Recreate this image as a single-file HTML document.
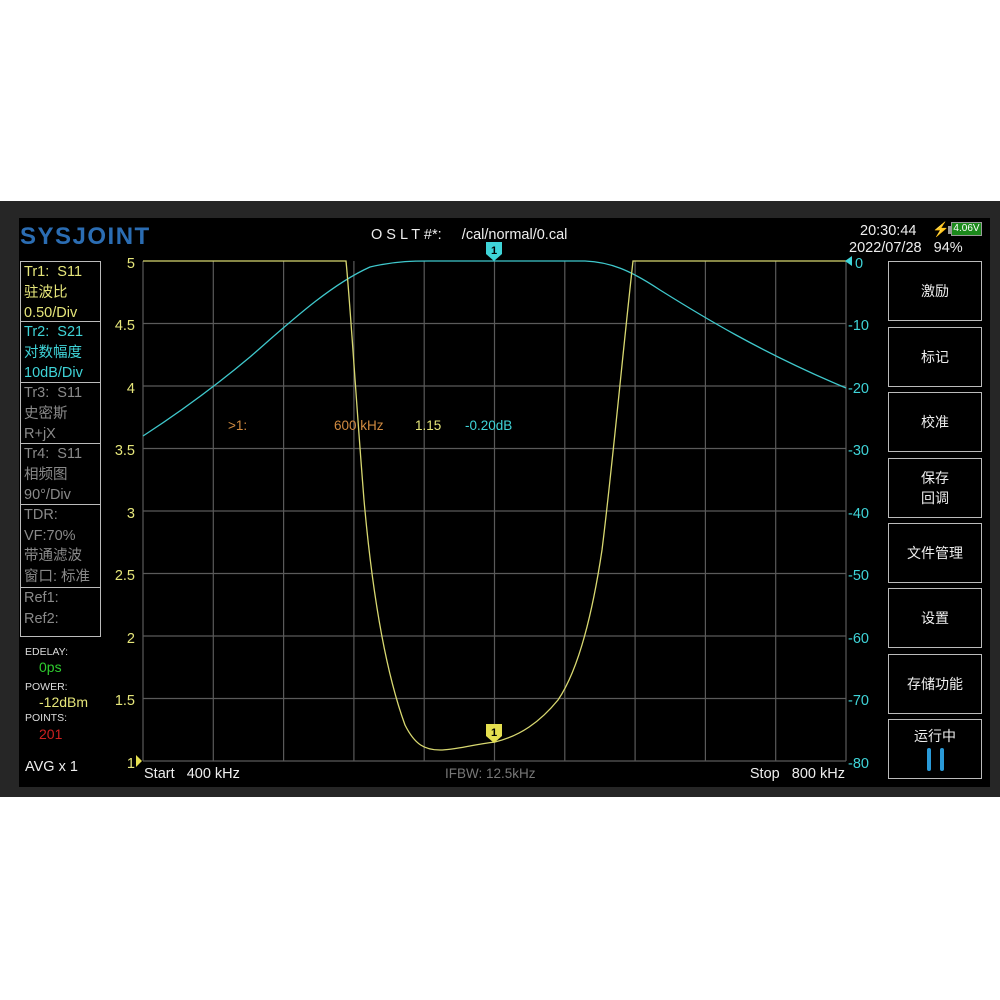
<!DOCTYPE html>
<html><head><meta charset="utf-8"><style>
*{margin:0;padding:0;box-sizing:border-box}
body{width:1000px;height:1000px;background:#fff;position:relative;overflow:hidden;font-family:"Liberation Sans","Noto Sans CJK SC",sans-serif}
.t{position:absolute;white-space:nowrap;line-height:1}
.box{position:absolute;left:20px;width:81px;border:1px solid #bbb}
.btn{position:absolute;left:888px;width:94px;height:60px;border:1.5px solid #bbb;color:#eee;font-size:14px;display:flex;align-items:center;justify-content:center;text-align:center;line-height:20px;font-family:"Noto Sans CJK SC",sans-serif}
.lp{font-size:14.5px;line-height:20.5px;padding-left:3px;font-family:"Liberation Sans","Noto Sans CJK SC",sans-serif}
</style></head><body>
<div style="position:absolute;left:0;top:201px;width:1000px;height:596px;background:#262626"></div>
<div style="position:absolute;left:19px;top:218px;width:971px;height:569px;background:#000"></div>
<div class="t" style="left:20px;top:225px;font-size:24px;font-weight:bold;color:#2b6db3;letter-spacing:1.5px">SYSJOINT</div>
<div class="t" style="left:371px;top:228px;font-size:14.5px;color:#eee">O S L T #*: &nbsp;&nbsp;&nbsp; /cal/normal/0.cal</div>
<div class="t" style="left:860px;top:224px;font-size:14.5px;color:#eee">20:30:44</div>
<div class="t" style="left:932px;top:222px;font-size:14px;color:#f0c020">⚡</div>
<div style="position:absolute;left:948px;top:226px;width:3px;height:8px;background:#999"></div>
<div style="position:absolute;left:951px;top:222px;width:31px;height:14px;border:1px solid #999;background:#1c8a1c;color:#fff;font-size:10px;line-height:12px;text-align:center">4.06V</div>
<div class="t" style="left:849px;top:241px;font-size:14.5px;color:#eee">2022/07/28 &nbsp;&nbsp;94%</div>

<div class="box lp" style="top:261px;height:61px;color:#e6e67a">Tr1: &nbsp;S11<br>驻波比<br>0.50/Div</div>
<div class="box lp" style="top:321px;height:62px;color:#3fd4d8">Tr2: &nbsp;S21<br>对数幅度<br>10dB/Div</div>
<div class="box lp" style="top:382px;height:62px;color:#8a8a8a">Tr3: &nbsp;S11<br>史密斯<br>R+jX</div>
<div class="box lp" style="top:443px;height:62px;color:#8a8a8a">Tr4: &nbsp;S11<br>相频图<br>90°/Div</div>
<div class="box lp" style="top:504px;height:84px;color:#8a8a8a">TDR:<br>VF:70%<br>带通滤波<br>窗口: 标准</div>
<div class="box lp" style="top:587px;height:50px;color:#8a8a8a">Ref1:<br>Ref2:</div>
<div class="t" style="left:25px;top:647px;font-size:10.5px;color:#ddd">EDELAY:</div>
<div class="t" style="left:39px;top:660px;font-size:14px;color:#2ecc2e">0ps</div>
<div class="t" style="left:25px;top:682px;font-size:10.5px;color:#ddd">POWER:</div>
<div class="t" style="left:39px;top:695px;font-size:14px;color:#e6e67a">-12dBm</div>
<div class="t" style="left:25px;top:713px;font-size:10.5px;color:#ddd">POINTS:</div>
<div class="t" style="left:39px;top:727px;font-size:14px;color:#cc2020">201</div>
<div class="t" style="left:25px;top:760px;font-size:14.5px;color:#eee">AVG x 1</div>

<svg style="position:absolute;left:0;top:0" width="1000" height="1000" font-family="Liberation Sans,sans-serif">
<g stroke="#5a5a5a" stroke-width="1.2">
<line x1="143" y1="261" x2="143" y2="761"/><line x1="213.3" y1="261" x2="213.3" y2="761"/><line x1="283.6" y1="261" x2="283.6" y2="761"/><line x1="353.9" y1="261" x2="353.9" y2="761"/><line x1="424.2" y1="261" x2="424.2" y2="761"/><line x1="494.5" y1="261" x2="494.5" y2="761"/><line x1="564.8" y1="261" x2="564.8" y2="761"/><line x1="635.1" y1="261" x2="635.1" y2="761"/><line x1="705.4" y1="261" x2="705.4" y2="761"/><line x1="775.7" y1="261" x2="775.7" y2="761"/><line x1="846" y1="261" x2="846" y2="761"/>
<line x1="143" y1="323.5" x2="846" y2="323.5"/><line x1="143" y1="386" x2="846" y2="386"/><line x1="143" y1="448.5" x2="846" y2="448.5"/><line x1="143" y1="511" x2="846" y2="511"/><line x1="143" y1="573.5" x2="846" y2="573.5"/><line x1="143" y1="636" x2="846" y2="636"/><line x1="143" y1="698.5" x2="846" y2="698.5"/><line x1="143" y1="761" x2="846" y2="761"/>
</g>
<path d="M143,436 C180,412 213,388 250,357 C290,322 330,285 370,267 C400,260 420,261 440,261 L585,261 C610,262 630,270 660,290 C700,315 760,352 846,388" fill="none" stroke="#3fc8cc" stroke-width="1.3"/>
<path d="M143,261 L346,261 C350,300 356,400 364,500 C372,590 385,670 405,725 C415,745 425,750 440,750 C455,750 470,745 495,742 C520,736 540,722 558,700 C575,675 590,630 602,550 C612,470 622,360 633,261 L846,261" fill="none" stroke="#d8d870" stroke-width="1.3"/>
<path d="M486,242 h16 v12 l-8,7 l-8,-7z" fill="#3fd4d8"/><text x="494" y="254" font-size="11" text-anchor="middle" fill="#000" font-weight="bold">1</text>
<path d="M486,724 h16 v12 l-8,7 l-8,-7z" fill="#e6e050"/><text x="494" y="736" font-size="11" text-anchor="middle" fill="#000" font-weight="bold">1</text>
<path d="M136,755 l6,6 l-6,6z" fill="#e6e050"/>
<path d="M852,256 l-7,5 l7,5z" fill="#3fd4d8"/>
<g font-size="14.5" fill="#e6e67a" text-anchor="end">
<text x="135" y="268">5</text><text x="135" y="330">4.5</text><text x="135" y="393">4</text><text x="135" y="455">3.5</text><text x="135" y="518">3</text><text x="135" y="580">2.5</text><text x="135" y="643">2</text><text x="135" y="705">1.5</text><text x="135" y="768">1</text>
</g>
<g font-size="14.5" fill="#3fd4d8">
<text x="855" y="268">0</text><text x="848" y="330">-10</text><text x="848" y="393">-20</text><text x="848" y="455">-30</text><text x="848" y="518">-40</text><text x="848" y="580">-50</text><text x="848" y="643">-60</text><text x="848" y="705">-70</text><text x="848" y="768">-80</text>
</g>
<text x="228" y="430" font-size="13.5" fill="#d08a40">&gt;1:</text>
<text x="334" y="430" font-size="13.5" fill="#d08a40">600 kHz</text>
<text x="415" y="430" font-size="13.5" fill="#e6e67a">1.15</text>
<text x="465" y="430" font-size="13.5" fill="#3fd4d8">-0.20dB</text>
<text x="144" y="778" font-size="14.5" fill="#eee">Start &#160;&#160;400 kHz</text>
<text x="445" y="778" font-size="13.5" fill="#777">IFBW: 12.5kHz</text>
<text x="845" y="778" font-size="14.5" fill="#eee" text-anchor="end">Stop &#160;&#160;800 kHz</text>
</svg>

<div class="btn" style="top:261px">激励</div>
<div class="btn" style="top:327px">标记</div>
<div class="btn" style="top:392px">校准</div>
<div class="btn" style="top:458px">保存<br>回调</div>
<div class="btn" style="top:523px">文件管理</div>
<div class="btn" style="top:588px">设置</div>
<div class="btn" style="top:654px">存储功能</div>
<div class="btn" style="top:719px;align-items:flex-start;padding-top:6px">运行中</div>
<div style="position:absolute;left:927px;top:748px;width:4px;height:23px;background:#2a9ad8;border-radius:2px"></div>
<div style="position:absolute;left:940px;top:748px;width:4px;height:23px;background:#2a9ad8;border-radius:2px"></div>
</body></html>
